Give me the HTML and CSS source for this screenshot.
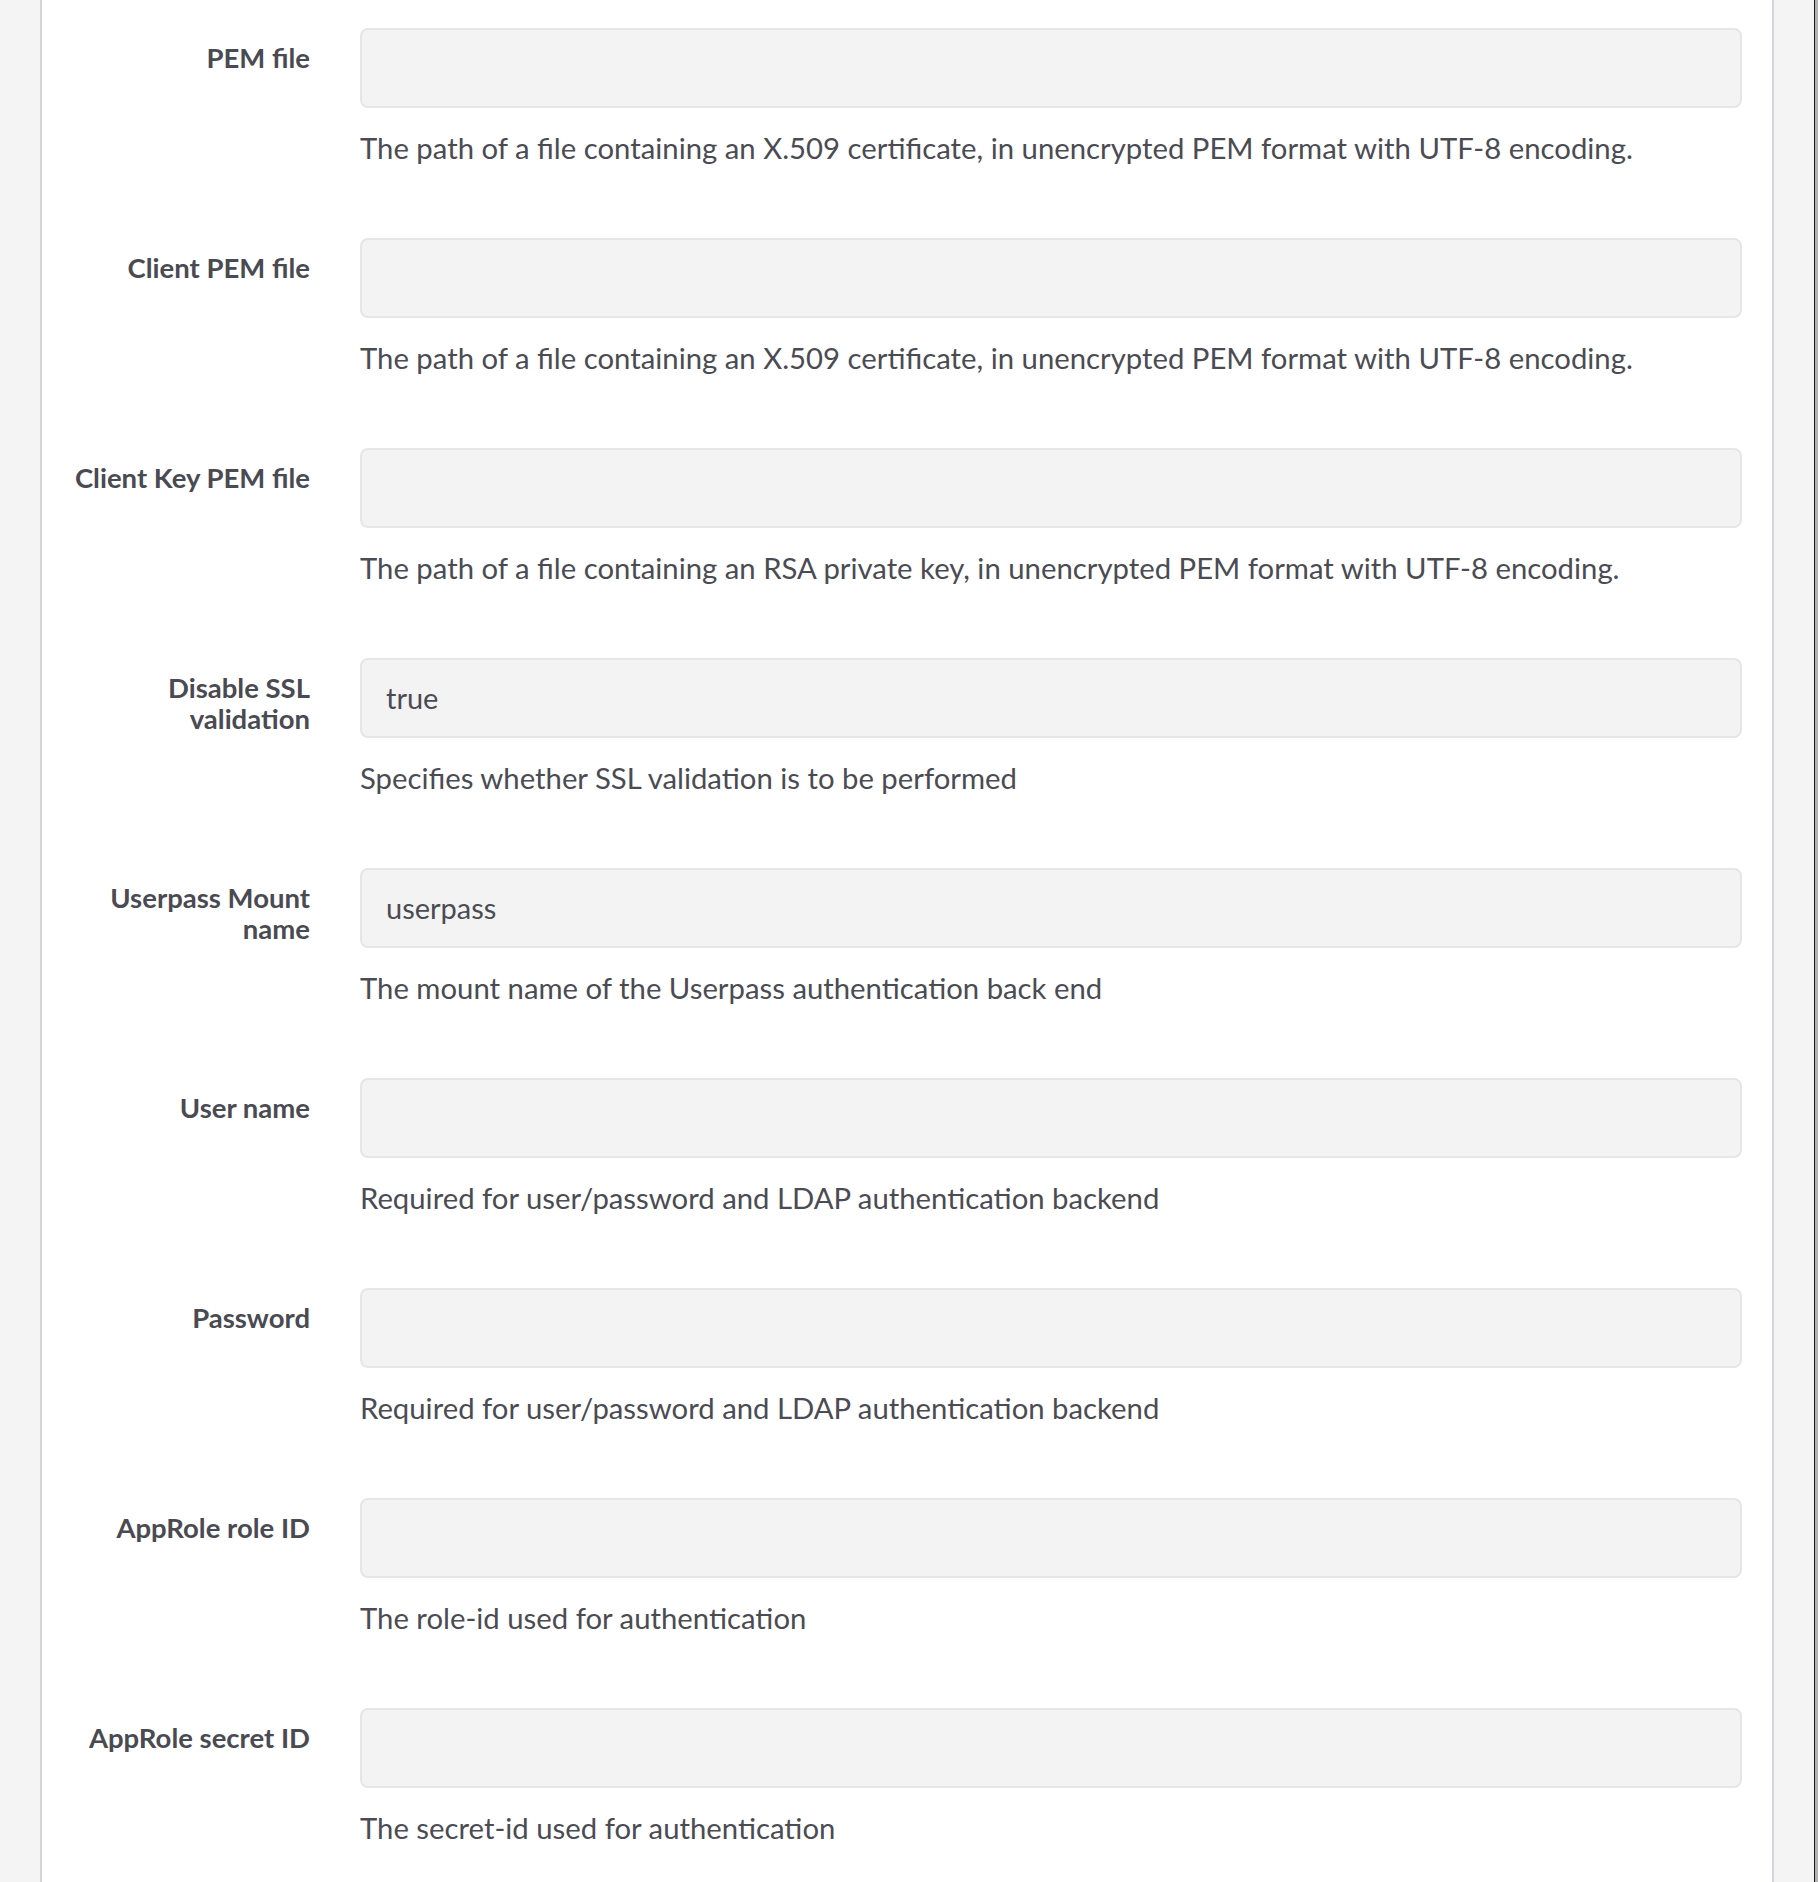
FILE: index.html
```html
<!DOCTYPE html>
<html lang="en">
<head>
<meta charset="utf-8">
<title>Vault settings</title>
<link rel="stylesheet" href="styles.css">
</head>
<body>
<div class="page">
  <div class="gutter-left"></div>
  <main class="panel">
    <div class="row">
      <div class="label">PEM file</div>
      <div class="field">
        <div class="input"></div>
        <p class="help">The path of a file containing an X.509 certificate, in unencrypted PEM format with UTF-8 encoding.</p>
      </div>
    </div>
    <div class="row">
      <div class="label">Client PEM file</div>
      <div class="field">
        <div class="input"></div>
        <p class="help">The path of a file containing an X.509 certificate, in unencrypted PEM format with UTF-8 encoding.</p>
      </div>
    </div>
    <div class="row">
      <div class="label">Client Key PEM file</div>
      <div class="field">
        <div class="input"></div>
        <p class="help">The path of a file containing an RSA private key, in unencrypted PEM format with UTF-8 encoding.</p>
      </div>
    </div>
    <div class="row">
      <div class="label">Disable SSL validation</div>
      <div class="field">
        <div class="input">true</div>
        <p class="help">Specifies whether SSL validation is to be performed</p>
      </div>
    </div>
    <div class="row">
      <div class="label">Userpass Mount name</div>
      <div class="field">
        <div class="input">userpass</div>
        <p class="help">The mount name of the Userpass authentication back end</p>
      </div>
    </div>
    <div class="row">
      <div class="label">User name</div>
      <div class="field">
        <div class="input"></div>
        <p class="help">Required for user/password and LDAP authentication backend</p>
      </div>
    </div>
    <div class="row">
      <div class="label">Password</div>
      <div class="field">
        <div class="input"></div>
        <p class="help">Required for user/password and LDAP authentication backend</p>
      </div>
    </div>
    <div class="row">
      <div class="label">AppRole role ID</div>
      <div class="field">
        <div class="input"></div>
        <p class="help">The role-id used for authentication</p>
      </div>
    </div>
    <div class="row">
      <div class="label">AppRole secret ID</div>
      <div class="field">
        <div class="input"></div>
        <p class="help">The secret-id used for authentication</p>
      </div>
    </div>
  </main>
  <div class="gutter-right"></div>
  <div class="edge"></div>
</div>
</body>
</html>
```
FILE: styles.css
```css
html, body {
  margin: 0;
  padding: 0;
}
body {
  background: #f4f4f4;
  font-family: "Lato", "Liberation Sans", sans-serif;
  color: #4b4b53;
  overflow: hidden;
}
.page {
  display: flex;
  height: 1882px;
  width: 1818px;
}
.gutter-left {
  width: 40px;
  flex: none;
  background: #f4f4f4;
}
.panel {
  box-sizing: border-box;
  width: 1734px;
  flex: none;
  background: #ffffff;
  border-left: 2px solid #d4d4d9;
  border-right: 2px solid #d4d4d9;
  padding: 28px 30px 0 0;
}
.gutter-right {
  width: 40px;
  flex: none;
  background: #f4f4f4;
}
.edge {
  flex: 1;
  border-left: 1px solid #1a1a1a;
  background: #b3b3b3;
}
.row {
  display: grid;
  grid-template-columns: 268px 1fr;
  column-gap: 50px;
  height: 210px;
}
.label {
  justify-self: end;
  width: 240px;
  text-align: right;
  font-weight: 700;
  font-size: 27.5px;
  line-height: 31px;
  padding-top: 14px;
  color: #4a4a52;
}
.field {
  display: flex;
  flex-direction: column;
}
.input {
  box-sizing: border-box;
  height: 80px;
  background: #f3f3f3;
  border: 2px solid #e6e6e6;
  border-radius: 8px;
  padding: 0 24px;
  font-size: 29px;
  line-height: 76px;
  color: #4b4b53;
}
.help {
  margin: 20px 0 0;
  font-size: 29.3px;
  line-height: 40px;
  color: #4b4b53;
}
```
